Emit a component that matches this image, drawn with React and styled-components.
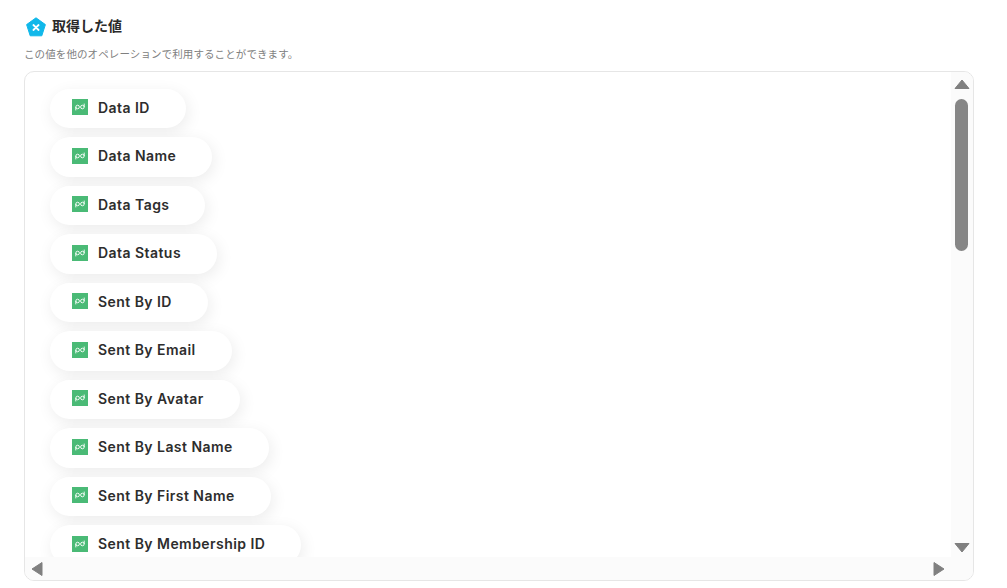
import React from 'react'
import styled, { createGlobalStyle } from 'styled-components'

const fields = [
  'Data ID',
  'Data Name',
  'Data Tags',
  'Data Status',
  'Sent By ID',
  'Sent By Email',
  'Sent By Avatar',
  'Sent By Last Name',
  'Sent By First Name',
  'Sent By Membership ID',
]

function PdIcon() {
  return (
    <svg width="16" height="16" viewBox="0 0 16 16">
      <rect width="16" height="16" fill="#4aba76" />
      <g fill="none" stroke="#fff" strokeWidth="0.9">
        <circle cx="5.6" cy="8" r="1.8" />
        <path d="M3.8 8V11.4" />
        <circle cx="10.4" cy="8" r="1.8" />
        <path d="M12.2 8V4.6" />
      </g>
    </svg>
  )
}

function Arrow({ dir }) {
  const points = {
    up: '8,1 15,9.5 1,9.5',
    down: '1,1.5 15,1.5 8,10',
    left: '11,0.5 11,13.5 1,7',
    right: '1,0.5 1,13.5 11,7',
  }
  const vertical = dir === 'up' || dir === 'down'
  return (
    <svg width={vertical ? 16 : 12} height={vertical ? 11 : 14} viewBox={vertical ? '0 0 16 11' : '0 0 12 14'}>
      <polygon points={points[dir]} fill="#808080" stroke="#808080" strokeWidth="1" strokeLinejoin="round" />
    </svg>
  )
}

function App() {
  return (
    <Page>
      <GlobalStyle />
      <Header>
        <svg width="20" height="20" viewBox="0 0 20 20">
          <path d="M10 .8 19.4 7.6 15.8 18.8H4.2L.6 7.6Z" fill="#11b8ea" stroke="#11b8ea" strokeLinejoin="round" />
          <path d="M7.4 8 12.6 13M12.6 8 7.4 13" stroke="#fff" strokeWidth="1.8" strokeLinecap="round" />
        </svg>
        <Title>取得した値</Title>
      </Header>
      <Description>この値を他のオペレーションで利用することができます。</Description>
      <Panel>
        <List>
          {fields.map((name) => (
            <Pill key={name}>
              <PdIcon />
              <span>{name}</span>
            </Pill>
          ))}
        </List>
        <VerticalBar>
          <Arrow dir="up" />
          <Thumb />
          <Spacer />
          <Arrow dir="down" />
        </VerticalBar>
        <HorizontalBar>
          <Arrow dir="left" />
          <Arrow dir="right" />
        </HorizontalBar>
      </Panel>
    </Page>
  )
}

export default App

const GlobalStyle = createGlobalStyle`
  html, body {
    margin: 0;
    background: #fff;
  }
  body {
    font-family: Inter, "Noto Sans CJK JP", sans-serif;
  }
`
const Page = styled.div`
  width: 1007px;
  height: 588px;
  box-sizing: border-box;
  padding: 17px 33px 7px 24px;
  overflow: hidden;
`
const Header = styled.div`
  display: flex;
  align-items: center;
  gap: 6px;
  height: 20px;
  padding-left: 2px;
`
const Title = styled.div`
  font-size: 14px;
  line-height: 18px;
  margin-top: -3px;
  font-weight: 600;
  color: #2a2a2a;
`
const Description = styled.div`
  margin-top: 10px;
  height: 24px;
  font-size: 10.5px;
  line-height: 16px;
  color: #808080;
  letter-spacing: 0.1px;
`
const Panel = styled.div`
  display: grid;
  grid-template-columns: 1fr 22px;
  grid-template-rows: 1fr 23px;
  height: 510px;
  box-sizing: border-box;
  border: 1px solid #e6e6e6;
  border-radius: 10px;
  overflow: hidden;
`
const List = styled.div`
  display: flex;
  flex-direction: column;
  align-items: flex-start;
  gap: 9px;
  padding: 16.8px 0 0 25px;
  overflow: hidden;
  min-height: 0;
`
const Pill = styled.div`
  flex: none;
  display: flex;
  align-items: center;
  gap: 10px;
  height: 39.5px;
  box-sizing: border-box;
  padding: 0 36px 3px 22px;
  border-radius: 20px;
  background: #fff;
  box-shadow: 2px 4px 16px rgba(0, 0, 0, 0.08);
  font-size: 14px;
  font-weight: 600;
  letter-spacing: 0.45px;
  color: #2d2d2d;
  white-space: nowrap;
`
const VerticalBar = styled.div`
  grid-row: 1 / 3;
  grid-column: 2;
  display: flex;
  flex-direction: column;
  align-items: center;
  padding: 7px 1px 27px 0;
  background: #fbfbfb;
`
const Thumb = styled.div`
  flex: none;
  width: 13px;
  height: 152px;
  margin-top: 9px;
  border-radius: 7px;
  background: #868686;
`
const Spacer = styled.div`
  flex: 1;
`
const HorizontalBar = styled.div`
  display: flex;
  align-items: center;
  justify-content: space-between;
  padding: 0 6px;
  background: #fbfbfb;
`
